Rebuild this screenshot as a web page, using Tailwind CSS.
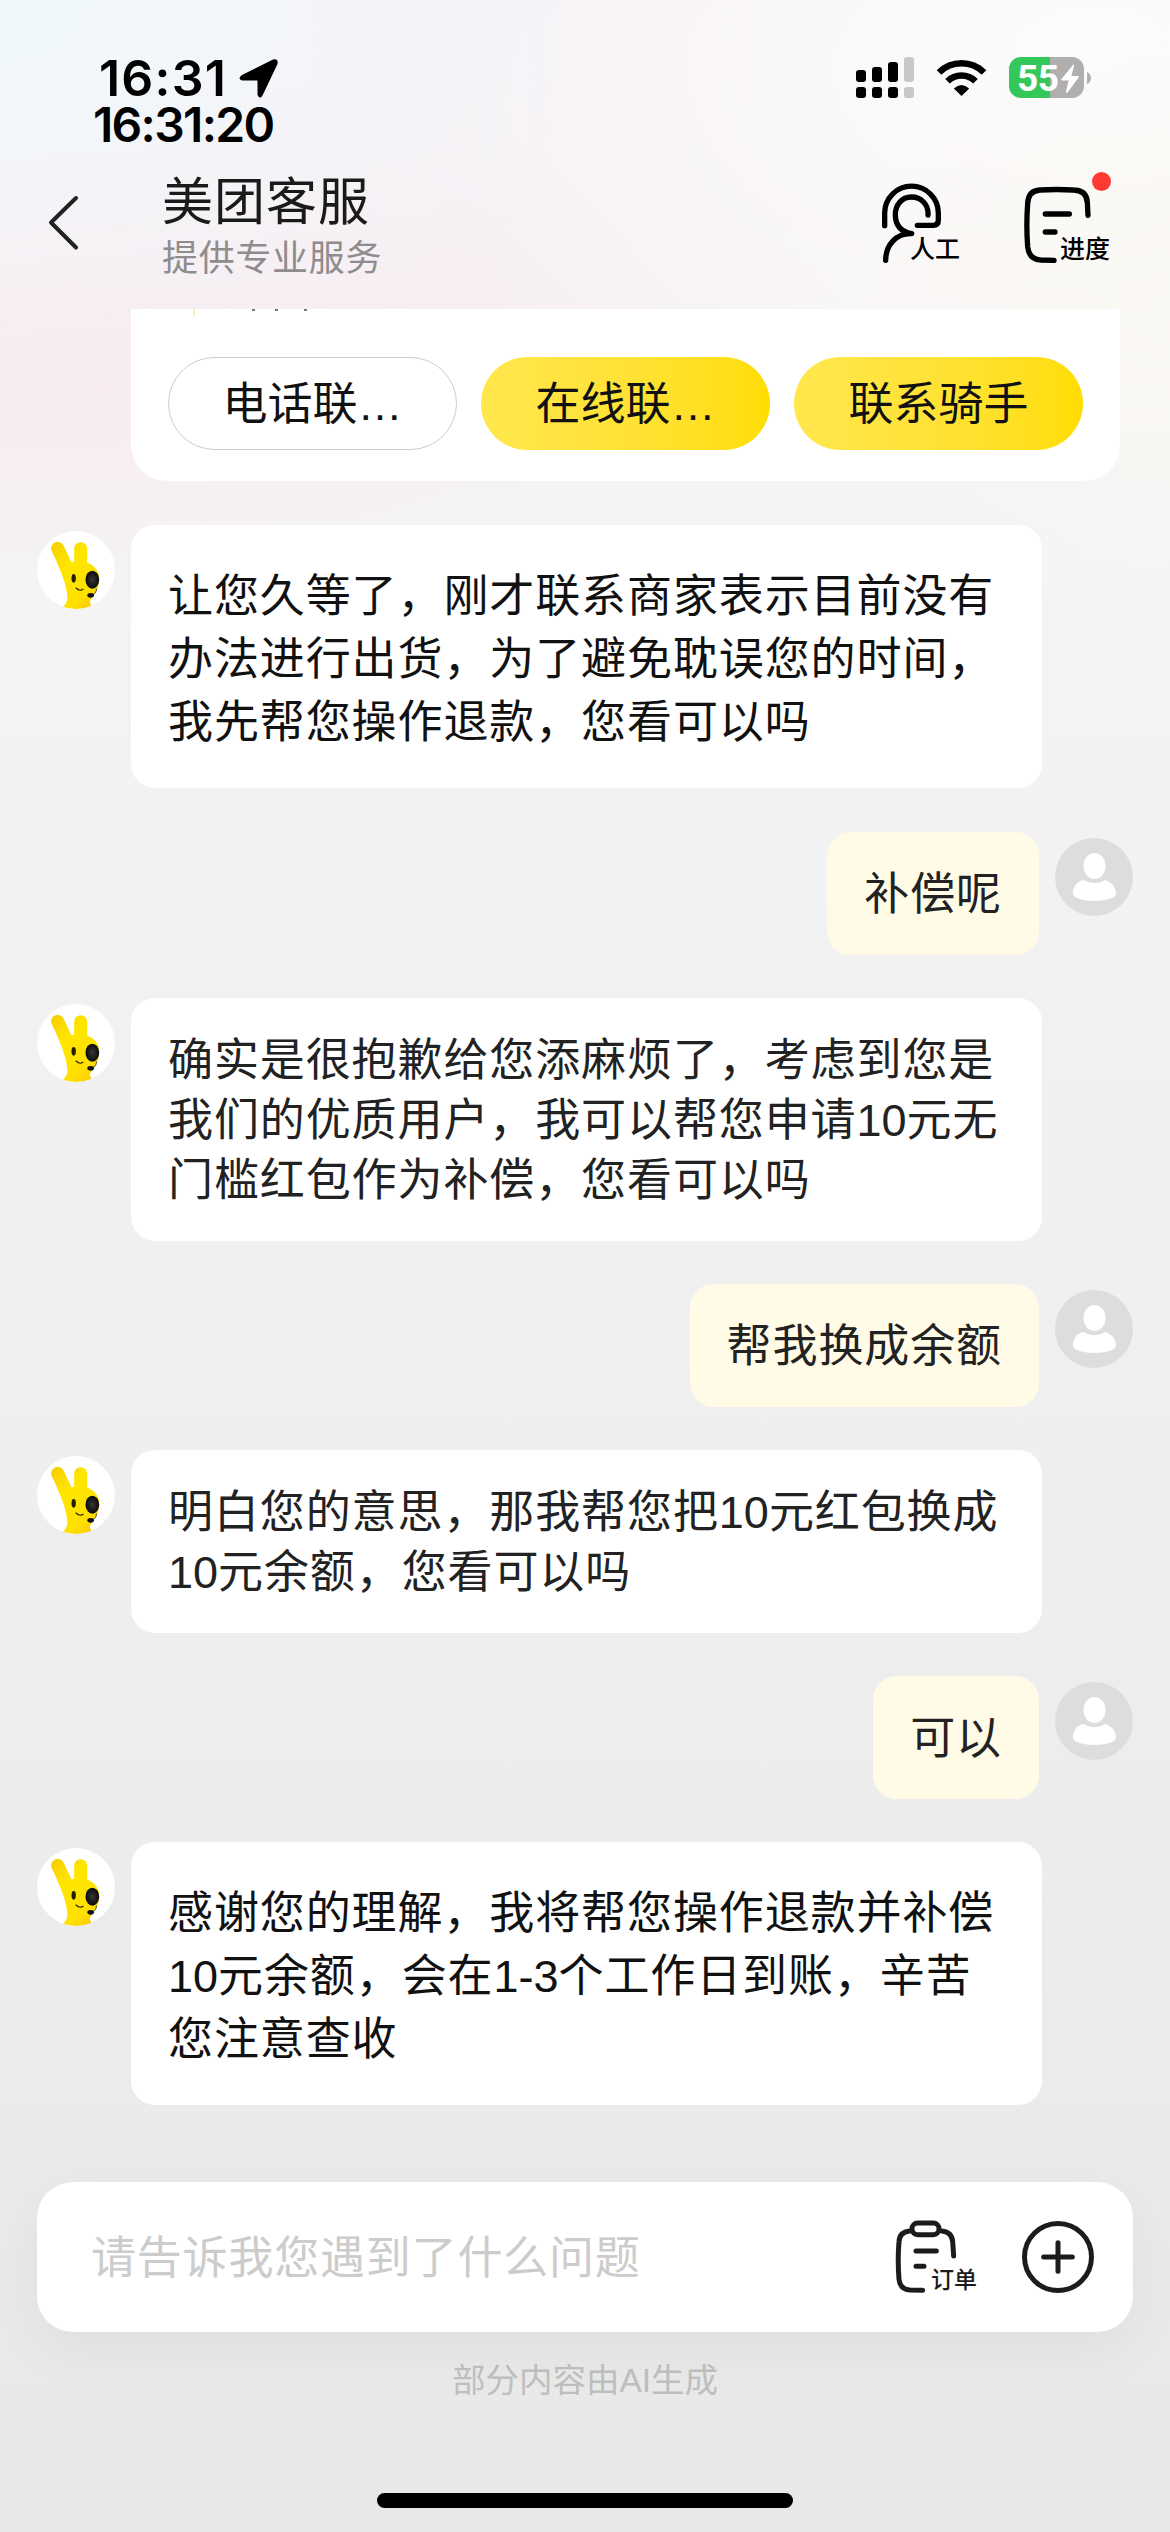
<!DOCTYPE html>
<html lang="zh-CN">
<head>
<meta charset="utf-8">
<title>美团客服</title>
<script src="https://cdn.jsdelivr.net/npm/@tailwindcss/browser@4"></script>
</head>
<body class="w-[1170px] h-[2532px] overflow-hidden font-['Liberation_Sans','Noto_Sans_CJK_SC',sans-serif] text-[#111] bg-[radial-gradient(ellipse_620px_420px_at_0px_0px,#f1f9fc_0%,#f1f9fc00_100%),radial-gradient(ellipse_640px_270px_at_60px_330px,#f9eaef_0%,#f9eaef00_100%),radial-gradient(ellipse_420px_330px_at_1170px_300px,#fbf9f3_0%,#fbf9f300_100%),radial-gradient(ellipse_700px_420px_at_1100px_60px,#fdfcfd_0%,#fdfcfd00_100%),linear-gradient(180deg,#f6f1f5_0px,#f6f2f5_300px,#f4f4f4_560px,#f0f0f0_1250px,#ebebeb_2100px,#e8e8e8_2532px)]">

<svg width="0" height="0" class="absolute">
  <defs>
    <linearGradient id="fur" gradientUnits="userSpaceOnUse" x1="40" x2="190" y1="60" y2="220">
      <stop offset="0" stop-color="#f7d200"/><stop offset=".3" stop-color="#ffe600"/><stop offset=".75" stop-color="#ffe000"/><stop offset="1" stop-color="#f9c600"/>
    </linearGradient>
    <radialGradient id="patch"><stop offset="0" stop-color="#383838"/><stop offset="1" stop-color="#0a0a0a"/></radialGradient>
    <clipPath id="round"><circle cx="117" cy="117" r="117"/></clipPath>
    <symbol id="bot" viewBox="0 0 234 234">
      <circle cx="117" cy="117" r="117" fill="#fff"/>
      <g clip-path="url(#round)">
        <path d="M62 52L104 140M131 53V110" fill="none" stroke="url(#fur)" stroke-width="39" stroke-linecap="round"/>
        <path d="M58 91L106 94Q128 86 150 95C175 103 189 124 187 149C185 178 164 195 158 213L170 240H72C78 222 91 219 91 200C90 172 80 140 58 91Z" fill="url(#fur)"/>
        <ellipse cx="110" cy="142" rx="6.500" ry="13" fill="#241d00"/>
        <path d="M117 171Q128 182 138 175" fill="none" stroke="#2b2300" stroke-width="3.500" stroke-linecap="round"/>
        <ellipse cx="166" cy="146" rx="20.500" ry="27" fill="url(#patch)"/>
        <path d="M178 172Q180 188 163 193" fill="none" stroke="#333" stroke-width="2.500"/>
        <ellipse cx="161" cy="193" rx="10" ry="7" fill="#111"/>
      </g>
    </symbol>
    <symbol id="user" viewBox="0 0 78 78">
      <circle cx="39" cy="39" r="39" fill="#dcdddf"/>
      <ellipse cx="39.500" cy="28" rx="11" ry="13" fill="#fff"/>
      <path d="M18 56C18 47 23 43 29 42C35 46 44 46 50 42C56 44 61 48 61 56C61 60 50 63 39.500 63S18 60 18 56Z" fill="#fff"/>
    </symbol>
  </defs>
</svg>

<header class="relative h-[309px]">
  <div class="absolute left-[99px] top-[56px] font-[Inter] font-semibold text-[50px] leading-[44px] tracking-[1.2px] text-black">16:31</div>
  <svg class="absolute left-[239px] top-[59px]" width="39" height="39" viewBox="0 0 39 39"><path d="M3 16L34 .6Q39.500-.8 38.500 5L23.500 36.500Q21 41 18.500 36V21.500H3Q-2 19.500 3 16Z"/></svg>
  <div class="absolute left-[93px] top-[103px] font-[Inter] font-semibold text-[48px] leading-[44px] tracking-[-1.700px] text-black">16:31:20</div>

  <svg class="absolute left-[856px] top-[57px]" width="58" height="41" viewBox="0 0 58 41">
    <g fill="#000">
      <rect y="13" width="10" height="12" rx="3"/><rect x="16" y="10" width="10" height="15" rx="3"/><rect x="32" y="5" width="10" height="20" rx="3"/>
      <rect y="30" width="10" height="11" rx="3"/><rect x="16" y="30" width="10" height="11" rx="3"/><rect x="32" y="30" width="10" height="11" rx="3"/>
    </g>
    <g fill="#c9c8c9"><rect x="48" width="10" height="25" rx="3"/><rect x="48" y="30" width="10" height="11" rx="3"/></g>
  </svg>
  <svg class="absolute left-[936px] top-[58px]" width="51" height="39" viewBox="0 0 51 39">
    <path d="M3 14.500A32 32 0 0 1 48 14.500M11.500 23.300A20 20 0 0 1 39.500 23.300" fill="none" stroke="#000" stroke-width="6.500"/>
    <path d="M25.500 38L17.800 30.500Q25.500 23.500 33.200 30.500Z"/>
  </svg>
  <div class="absolute left-[1009px] top-[57px] w-[75px] h-[41px] rounded-[12px] bg-[linear-gradient(90deg,#34c759_41px,#b0aeaf_41px)]">
    <span class="absolute left-[8px] top-0 font-[Roboto] font-bold text-[37px] leading-[43px] tracking-[-0.5px] text-white">55</span>
    <svg class="absolute left-[52px] top-[7px]" width="18" height="29" viewBox="0 0 52 84"><path d="M35 2L1 44Q-1 48 4 48H22L14 82Q16 85 20 81L51 39Q53 35 48 35H30L38 4Q38 0 35 2Z" fill="#fff"/></svg>
  </div>
  <svg class="absolute left-[1087px] top-[72px]" width="4" height="12" viewBox="0 0 4 12"><path d="M0 0Q4 2 4 6T0 12Z" fill="#b0aeaf"/></svg>

  <svg class="absolute left-[46px] top-[194px]" width="34" height="58" viewBox="0 0 34 58"><path d="M30 4L5 28.500L30 53.500" fill="none" stroke="#222" stroke-width="4" stroke-linecap="round" stroke-linejoin="round"/></svg>
  <h1 class="absolute left-[162px] top-[173px] text-[51px] leading-[60px] tracking-[1px] font-normal text-[#1a1a1a]">美团客服</h1>
  <p class="absolute left-[162px] top-[238px] text-[36px] leading-[42px] tracking-[0.7px] text-[#8f8c8e]">提供专业服务</p>

  <div class="absolute left-[880px] top-[183px] w-[82px] h-[82px]">
    <svg width="80" height="82" viewBox="240 460 240 246" fill="none" stroke="#000" stroke-width="16" stroke-linecap="round" stroke-linejoin="round">
      <path d="M254 588V550A80 80 0 0 1 415 550V572Q415 587 400 587H352"/>
      <path d="M384 556C386 524 363 502 334 502C305 502 286 526 286 555C286 582 299 605 335 612C290 610 257 645 257 692"/>
    </svg>
    <span class="absolute left-[30px] top-[51px] text-[25px] leading-[30px] font-medium text-black whitespace-nowrap">人工</span>
  </div>
  <div class="absolute left-[1022px] top-[172px] w-[92px] h-[92px]">
    <svg class="absolute left-0 top-[13px]" width="72" height="80" viewBox="666 465 216 240" fill="none" stroke="#000" stroke-width="16" stroke-linecap="round">
      <path d="M864 556L862 518Q860 480 820 480C785 478 755 478 720 480Q685 482 683 520C680 560 680 610 683 650Q687 688 722 690L762 691M736 552H808M736 606H765"/>
    </svg>
    <i class="absolute left-[70px] top-0 size-[19px] rounded-full bg-[#fe3b33]"></i>
    <span class="absolute left-[38px] top-[62px] text-[25px] leading-[30px] font-medium text-black whitespace-nowrap">进度</span>
  </div>
</header>

<main class="flex flex-col gap-[43px] h-[1873px] overflow-hidden">
  <section class="relative ml-[131px] w-[989px] h-[172px] mb-[1px] pt-[48px] pl-[37px] bg-white rounded-b-[36px] flex gap-[24px] overflow-hidden">
    <i class="absolute left-[62px] top-0 w-[2px] h-[7px] bg-[#fff0b8]"></i>
    <i class="absolute left-[121px] top-0 w-[3px] h-[2px] bg-[#777]"></i>
    <i class="absolute left-[144px] top-0 w-[3px] h-[2px] bg-[#777]"></i>
    <i class="absolute left-[173px] top-0 w-[3px] h-[2px] bg-[#777]"></i>
    <button class="w-[289px] h-[93px] pt-[3px] rounded-full border border-[#ccc] text-[45px]">电话联…</button>
    <button class="w-[289px] h-[93px] pt-[3px] rounded-full bg-linear-to-r from-[#ffe74d] to-[#ffdd00] text-[45px]">在线联…</button>
    <button class="w-[289px] h-[93px] pt-[3px] rounded-full bg-linear-to-r from-[#ffe74d] to-[#ffdd00] text-[45px]">联系骑手</button>
  </section>

  <div class="flex items-start gap-[16px] pl-[37px] mb-[1px]">
    <svg class="mt-[6px] size-[78px]"><use href="#bot"/></svg>
    <p class="w-[911px] h-[263px] rounded-[24px] bg-white pl-[37px] pt-[40px] text-[45px] tracking-[0.9px] leading-[63px] whitespace-nowrap">让您久等了，刚才联系商家表示目前没有<br>办法进行出货，为了避免耽误您的时间，<br>我先帮您操作退款，您看可以吗</p>
  </div>

  <div class="flex items-start justify-end gap-[16px] pr-[37px]">
    <p class="h-[123px] rounded-[24px] bg-[#fffbe6] px-[37px] pt-[33px] text-[45px] tracking-[0.9px] leading-[60px] text-[#222]">补偿呢</p>
    <svg class="mt-[6px] size-[78px]"><use href="#user"/></svg>
  </div>

  <div class="flex items-start gap-[16px] pl-[37px]">
    <svg class="mt-[6px] size-[78px]"><use href="#bot"/></svg>
    <p class="w-[911px] h-[243px] rounded-[24px] bg-white pl-[37px] pt-[33px] text-[45px] tracking-[0.9px] leading-[60px] text-[#222] whitespace-nowrap">确实是很抱歉给您添麻烦了，考虑到您是<br>我们的优质用户，我可以帮您申请<span class="tracking-normal">10</span>元无<br>门槛红包作为补偿，您看可以吗</p>
  </div>

  <div class="flex items-start justify-end gap-[16px] pr-[37px]">
    <p class="h-[123px] rounded-[24px] bg-[#fffbe6] px-[37px] pt-[33px] text-[45px] tracking-[0.9px] leading-[60px] text-[#222]">帮我换成余额</p>
    <svg class="mt-[6px] size-[78px]"><use href="#user"/></svg>
  </div>

  <div class="flex items-start gap-[16px] pl-[37px]">
    <svg class="mt-[6px] size-[78px]"><use href="#bot"/></svg>
    <p class="w-[911px] h-[183px] rounded-[24px] bg-white pl-[37px] pt-[33px] text-[45px] tracking-[0.9px] leading-[60px] text-[#222] whitespace-nowrap">明白您的意思，那我帮您把<span class="tracking-normal">10</span>元红包换成<br><span class="tracking-normal">10</span>元余额，您看可以吗</p>
  </div>

  <div class="flex items-start justify-end gap-[16px] pr-[37px]">
    <p class="h-[123px] rounded-[24px] bg-[#fffbe6] px-[37px] pt-[33px] text-[45px] tracking-[0.9px] leading-[60px] text-[#222]">可以</p>
    <svg class="mt-[6px] size-[78px]"><use href="#user"/></svg>
  </div>

  <div class="flex items-start gap-[16px] pl-[37px]">
    <svg class="mt-[6px] size-[78px]"><use href="#bot"/></svg>
    <p class="w-[911px] h-[263px] rounded-[24px] bg-white pl-[37px] pt-[40px] text-[45px] tracking-[0.9px] leading-[63px] whitespace-nowrap">感谢您的理解，我将帮您操作退款并补偿<br><span class="tracking-normal">10</span>元余额，会在<span class="tracking-normal">1-3</span>个工作日到账，辛苦<br>您注意查收</p>
  </div>
</main>

<footer class="flex flex-col items-center">
  <div class="relative w-[1096px] h-[150px] rounded-[36px] bg-white shadow-[0_15px_60px_rgba(0,0,0,0.05)] flex items-center pl-[54px] text-[#1c1c1c]">
    <span class="pt-[4px] text-[45px] leading-[60px] tracking-[0.8px] text-[#ccc] whitespace-nowrap">请告诉我您遇到了什么问题</span>
    <div class="absolute left-[857px] top-[36px] w-[84px] h-[78px]">
      <svg width="64" height="76" viewBox="102 144 192 228" fill="none" stroke="currentColor" stroke-width="15" stroke-linecap="round">
        <rect x="156" y="159" width="81" height="35" rx="17"/>
        <path d="M150 183Q118 186 117 215C114 250 114 290 117 328Q120 358 150 360L188 361M245 183Q276 186 278 215L281 258M168 243H229M168 289H192"/>
      </svg>
      <span class="absolute left-[37px] top-[48px] text-[23px] leading-[28px] font-medium whitespace-nowrap">订单</span>
    </div>
    <svg class="absolute left-[984px] top-[38px]" width="74" height="74" viewBox="0 0 222 222" fill="none" stroke="currentColor" stroke-width="15" stroke-linecap="round"><circle cx="111" cy="111" r="100.500"/><path d="M68 111H154M111 68V154"/></svg>
  </div>
  <p class="mt-[26px] text-[33.500px] leading-[46px] text-[#bfbfbf]">部分内容由AI生成</p>
  <div class="mt-[89px] w-[416px] h-[15px] rounded-full bg-black"></div>
</footer>
</body>
</html>
